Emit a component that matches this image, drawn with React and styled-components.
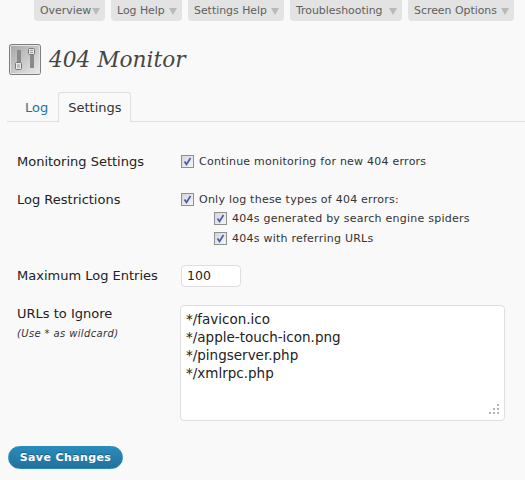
import React from "react";
import styled, { createGlobalStyle } from "styled-components";

const GlobalStyle = createGlobalStyle`
  html, body {
    margin: 0;
    padding: 0;
    background: #f9f9f9;
    font-family: "DejaVu Sans", Verdana, sans-serif;
    color: #333;
  }
`;

const Page = styled.div`
  width: 525px;
  height: 480px;
  overflow: hidden;
  box-sizing: border-box;
`;

const HelpBar = styled.div`
  display: flex;
  justify-content: flex-end;
  gap: 6px;
  padding-right: 11px;
`;

const HelpTab = styled.div`
  display: flex;
  align-items: center;
  justify-content: space-between;
  box-sizing: border-box;
  width: ${(p) => p.$w}px;
  height: 21px;
  padding: 0 5px 0 6px;
  background: #e3e3e3;
  border-radius: 0 0 4px 4px;
  font-size: 10.9px;
  color: #606060;
`;

const Arrow = styled.span`
  width: 0;
  height: 0;
  margin-top: 2px;
  border-left: 4px solid transparent;
  border-right: 4px solid transparent;
  border-top: 7px solid #b9b9b9;
`;

const TitleRow = styled.div`
  display: flex;
  align-items: center;
  gap: 8px;
  margin: 22px 0 0 9px;
  height: 32px;
`;

const Title = styled.h1`
  margin: 0;
  font-family: "DejaVu Serif", Georgia, serif;
  font-style: italic;
  font-weight: 400;
  font-size: 21.7px;
  color: #464646;
`;

const Tabs = styled.div`
  display: flex;
  align-items: flex-end;
  height: 29px;
  margin: 17px 0 0 7px;
  padding-left: 6px;
  border-bottom: 1px solid #dfdfdf;
`;

const Tab = styled.div`
  display: flex;
  align-items: center;
  box-sizing: border-box;
  height: ${(p) => (p.$active ? "30px" : "29px")};
  padding-left: ${(p) => (p.$active ? "9px" : "12px")};
  padding-right: ${(p) => (p.$active ? "8px" : "10px")};
  font-size: 13px;
  color: ${(p) => (p.$active ? "#333" : "#21759b")};
  background: ${(p) => (p.$active ? "#f9f9f9" : "transparent")};
  border: ${(p) => (p.$active ? "1px solid #dfdfdf" : "none")};
  border-bottom: none;
  border-radius: 3px 3px 0 0;
  margin-bottom: -1px;
`;

const Form = styled.div`
  padding: 31px 0 0 17px;
`;

const Row = styled.div`
  display: grid;
  grid-template-columns: 163px 1fr;
  margin-bottom: ${(p) => p.$mb}px;
`;

const Label = styled.div`
  padding-top: 1px;
  font-size: 13px;
  line-height: 16px;
  color: #222;
`;

const Hint = styled.div`
  margin-top: 6px;
  font-size: 10px;
  line-height: 12px;
  letter-spacing: 0.37px;
  font-style: italic;
  color: #333;
`;

const CheckRow = styled.div`
  display: flex;
  align-items: center;
  gap: 5px;
  height: ${(p) => (p.$sub ? "20px" : "16px")};
  margin-left: ${(p) => (p.$sub ? "34px" : "1px")};
  margin-bottom: ${(p) => (p.$first ? "1px" : "0")};
  font-size: 11px;
  letter-spacing: 0.24px;
  color: #333;
`;

const Box = styled.span`
  display: flex;
  flex: none;
  box-sizing: border-box;
  width: 13px;
  height: 13px;
  border: 1px solid #8e8f8f;
  background: linear-gradient(135deg, #d4d6dc, #f6f6f6);
`;

const SmallInput = styled.div`
  box-sizing: border-box;
  width: 60px;
  height: 22px;
  margin: -2px 0 0 1px;
  padding-left: 5px;
  background: #fff;
  border: 1px solid #dfdfdf;
  border-radius: 4px;
  font-size: 12.5px;
  line-height: 20px;
  color: #222;
`;

const TextBox = styled.div`
  position: relative;
  box-sizing: border-box;
  width: 325px;
  height: 116px;
  padding: 4px 5px;
  background: #fff;
  border: 1px solid #dfdfdf;
  border-radius: 4px;
  font-size: 13.5px;
  line-height: 18px;
  color: #222;
`;

const Grip = styled.svg`
  position: absolute;
  right: 5px;
  bottom: 6px;
`;

const SaveButton = styled.div`
  display: flex;
  align-items: center;
  justify-content: center;
  box-sizing: border-box;
  width: 115px;
  height: 23px;
  margin-left: 8px;
  border-radius: 12px;
  background: linear-gradient(180deg, #2a8cba, #22719b);
  border: 1px solid #298cba;
  color: #fff;
  font-size: 11px;
  font-weight: 700;
  letter-spacing: 0.4px;
  text-shadow: 0 -1px 0 rgba(0, 0, 0, 0.3);
`;

const Check = () => (
  <Box>
    <svg width="11" height="11" viewBox="0 0 11 11">
      <path d="M2.5 5.5 L4.5 8.5 L8.5 2" fill="none" stroke="#4a5aa8" strokeWidth="1.7" />
    </svg>
  </Box>
);

const SettingsIcon = () => (
  <svg width="32" height="31" viewBox="0 0 32 31">
    <defs>
      <linearGradient id="bg" x1="0" y1="0" x2="1" y2="1">
        <stop offset="0" stopColor="#a4a4a4" />
        <stop offset="1" stopColor="#ececec" />
      </linearGradient>
    </defs>
    <rect x="0.5" y="0.5" width="31" height="30" rx="2" fill="url(#bg)" stroke="#7d7d7d" />
    <rect x="1.5" y="1.5" width="29" height="28" rx="1" fill="none" stroke="#e4e4e4" />
    <rect x="8" y="6" width="4" height="18" fill="#8a8a8a" />
    <rect x="21" y="5" width="4" height="19" fill="#8a8a8a" />
    <rect x="6.5" y="18.5" width="6" height="7" rx="1" fill="#e8e8e8" stroke="#777" />
    <path d="M8 21 h3 M8 23 h3" stroke="#999" />
    <rect x="19.5" y="4.5" width="6" height="6" rx="1" fill="#e8e8e8" stroke="#777" />
    <path d="M21 6.5 h3 M21 8.5 h3" stroke="#999" />
  </svg>
);

const App = () => {
  return (
    <Page>
      <GlobalStyle />
      <HelpBar>
        <HelpTab $w={71}>Overview<Arrow /></HelpTab>
        <HelpTab $w={71}>Log Help<Arrow /></HelpTab>
        <HelpTab $w={96}>Settings Help<Arrow /></HelpTab>
        <HelpTab $w={112}>Troubleshooting<Arrow /></HelpTab>
        <HelpTab $w={106}>Screen Options<Arrow /></HelpTab>
      </HelpBar>

      <TitleRow>
        <SettingsIcon />
        <Title>404 Monitor</Title>
      </TitleRow>

      <Tabs>
        <Tab>Log</Tab>
        <Tab $active>Settings</Tab>
      </Tabs>

      <Form>
        <Row $mb={21}>
          <Label>Monitoring Settings</Label>
          <CheckRow><Check />Continue monitoring for new 404 errors</CheckRow>
        </Row>
        <Row $mb={19}>
          <Label>Log Restrictions</Label>
          <div>
            <CheckRow $first><Check />Only log these types of 404 errors:</CheckRow>
            <CheckRow $sub><Check />404s generated by search engine spiders</CheckRow>
            <CheckRow $sub><Check />404s with referring URLs</CheckRow>
          </div>
        </Row>
        <Row $mb={18}>
          <Label>Maximum Log Entries</Label>
          <SmallInput>100</SmallInput>
        </Row>
        <Row $mb={25}>
          <div>
            <Label>URLs to Ignore</Label>
            <Hint>(Use * as wildcard)</Hint>
          </div>
          <TextBox>
            */favicon.ico<br />
            */apple-touch-icon.png<br />
            */pingserver.php<br />
            */xmlrpc.php
            <Grip width="10" height="10" viewBox="0 0 10 10" fill="#b5b5b5">
              <rect x="8" y="0" width="2" height="2" />
              <rect x="4" y="4" width="2" height="2" />
              <rect x="8" y="4" width="2" height="2" />
              <rect x="0" y="8" width="2" height="2" />
              <rect x="4" y="8" width="2" height="2" />
              <rect x="8" y="8" width="2" height="2" />
            </Grip>
          </TextBox>
        </Row>
      </Form>
      <SaveButton>Save Changes</SaveButton>
    </Page>
  );
};

export default App;
